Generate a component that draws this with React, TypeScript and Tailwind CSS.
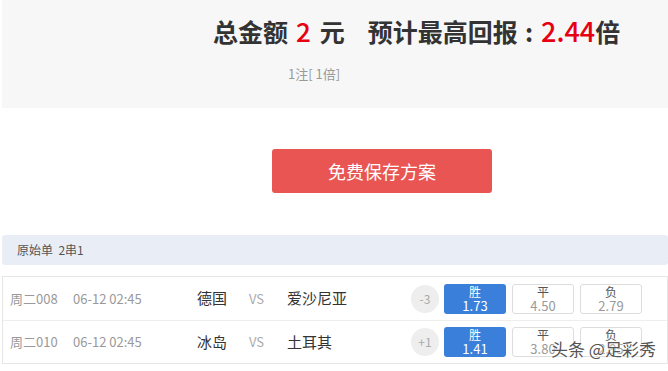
const font = { fontFamily: '"Noto Sans CJK SC", "Noto Sans", sans-serif' };

const matches = [
    { no: "周二008", time: "06-12 02:45", home: "德国", away: "爱沙尼亚", hc: "-3", odds: ["1.73", "4.50", "2.79"] },
    { no: "周二010", time: "06-12 02:45", home: "冰岛", away: "土耳其", hc: "+1", odds: ["1.41", "3.80", "2.95"] },
];

const labels = ["胜", "平", "负"];

export default function App() {
    return (
        <div className="relative w-[668px] h-[371px] bg-white overflow-hidden" style={font}>
            <div className="ml-[2px] h-[108px] bg-[#f7f7f7]">
                <div className="pt-[14px] pl-[211px] flex items-baseline text-[25px] leading-[33px] font-bold text-[#333] whitespace-nowrap">
                    <span>总金额</span>
                    <span className="text-[#e60012] ml-[8px] font-medium text-[26px]">2</span>
                    <span className="ml-[9px]">元</span>
                    <span className="ml-[23px]">预计最高回报</span>
                    <span className="ml-[7px] mr-[8px]">:</span>
                    <span className="text-[#e60012] font-medium text-[27px]">2.44</span>
                    <span>倍</span>
                </div>
                <div className="mt-[17px] pl-[286px] text-[13px] leading-[18px] text-[#999]">1注[ 1倍]</div>
            </div>

            <div className="mt-[41px] ml-[272px] w-[220px] h-[44px] rounded-[3px] bg-[#e85552] flex items-center justify-center text-white text-[18px]">
                免费保存方案
            </div>

            <div className="mt-[42px] ml-[2px] h-[30px] rounded-[3px] bg-[#e9eef6] flex items-center pl-[15px] text-[12px] text-[#555]">
                原始单&nbsp;&nbsp;2串1
            </div>

            <div className="mt-[11px] ml-[2px] border border-[#e6e6e6]">
                {matches.map((m, i) => (
                    <div
                        key={m.no}
                        className={"h-[43px] flex items-center " + (i > 0 ? "border-t border-[#eee]" : "")}
                    >
                        <span className="ml-[7px] w-[63px] text-[13px] text-[#999]">{m.no}</span>
                        <span className="w-[124px] text-[13px] text-[#999]">{m.time}</span>
                        <span className="w-[52px] text-[15px] text-[#333]">{m.home}</span>
                        <span className="w-[38px] text-[13px] text-[#aaa]">VS</span>
                        <span className="w-[124px] text-[15px] text-[#333]">{m.away}</span>
                        <span className="w-[28px] h-[28px] rounded-full bg-[#eee] flex items-center justify-center text-[12px] text-[#aaa]">
                            {m.hc}
                        </span>
                        <div className="ml-[5px] flex gap-[6px]">
                            {m.odds.map((o, j) => (
                                <div
                                    key={j}
                                    className={
                                        "w-[62px] h-[30px] rounded-[3px] flex flex-col items-center justify-center leading-[14px] text-[13px] " +
                                        (j === 0 ? "bg-[#3a7fd9] text-white" : "border border-[#ddd] text-[#999]")
                                    }
                                >
                                    <span className={"text-[12px] " + (j === 0 ? "" : "text-[#555]")}>{labels[j]}</span>
                                    <span>{o}</span>
                                </div>
                            ))}
                        </div>
                    </div>
                ))}
            </div>

            <div
                className="absolute left-[551px] top-[339px] text-[17px] leading-[20px] text-[#555] whitespace-nowrap"
                style={{ textShadow: "0 0 2px #fff, 0 0 2px #fff" }}
            >
                头条 @足彩秀
            </div>
        </div>
    );
}
